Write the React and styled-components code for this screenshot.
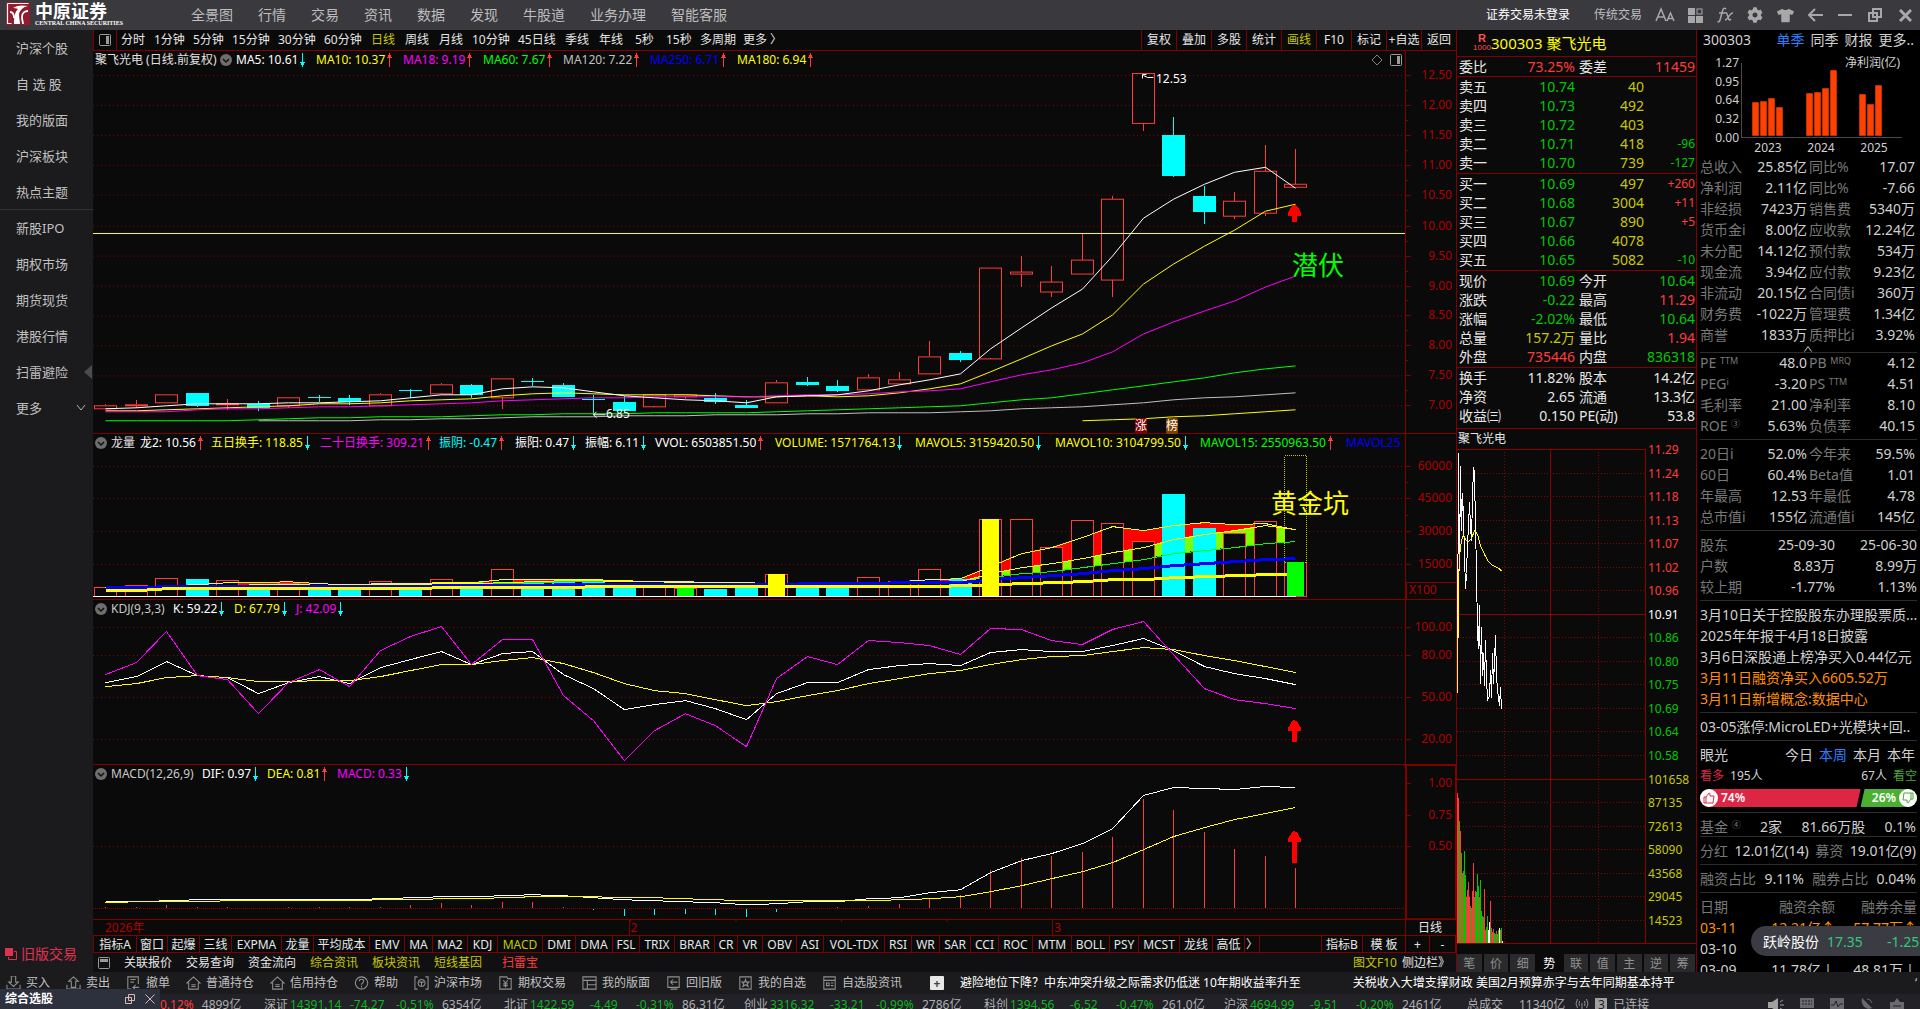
import React from 'react';
import styled, { createGlobalStyle } from 'styled-components';
import { FaCog, FaTshirt } from 'react-icons/fa';

const RED = '#ff3c3c';
const LINE = '#800000';
const AXIS = '#b00000';
const CYAN = '#00ffff';
const YELLOW = '#ffff00';
const OLIVE = '#c8c800';
const GREEN = '#00ff00';
const DOWN = '#00c800';
const MAGENTA = '#ff00ff';
const ORANGE = '#ff9000';

const MENU = ['全景图', '行情', '交易', '资讯', '数据', '发现', '牛股道', '业务办理', '智能客服'];

const SIDEBAR = ['沪深个股', '自 选 股', '我的版面', '沪深板块', '热点主题', '新股IPO', '期权市场', '期货现货', '港股行情', '扫雷避险', '更多'];

const PERIODS = [
    ['分时', 33], ['1分钟', 39], ['5分钟', 39], ['15分钟', 46], ['30分钟', 46], ['60分钟', 47], ['日线', 34],
    ['周线', 34], ['月线', 33], ['10分钟', 46], ['45日线', 47], ['季线', 34], ['年线', 36], ['5秒', 31],
    ['15秒', 34], ['多周期', 43], ['更多 〉', 48]
];

const TOOLS = ['复权', '叠加', '多股', '统计', '画线', 'F10', '标记', '+自选', '返回'];

const INDICATORS = [
    ['指标A', 43], ['窗口', 31], ['起爆', 32], ['三线', 32], ['EXPMA', 50], ['龙量', 32], ['平均成本', 56],
    ['EMV', 35], ['MA', 28], ['MA2', 35], ['KDJ', 30], ['MACD', 45], ['DMI', 33], ['DMA', 37], ['FSL', 27],
    ['TRIX', 35], ['BRAR', 40], ['CR', 23], ['VR', 25], ['OBV', 34], ['ASI', 27], ['VOL-TDX', 61], ['RSI', 27],
    ['WR', 28], ['SAR', 31], ['CCI', 28], ['ROC', 34], ['MTM', 39], ['BOLL', 38], ['PSY', 29], ['MCST', 41],
    ['龙线', 33], ['高低', 32], ['〉', 15]
];

// [kind, high, top, bottom, low]
const CANDLES = [
    ['r', 405, 406, 409, 409], ['r', 401, 405, 406, 409], ['r', 395, 395, 403, 403], ['c', 394, 394, 407, 408],
    ['r', 400, 404, 405, 411], ['c', 402, 405, 409, 412], ['r', 398, 398, 406, 409], ['c', 396, 398, 399, 403],
    ['c', 396, 399, 403, 406], ['r', 394, 395, 406, 406], ['c', 390, 391, 392, 399], ['r', 384, 385, 394, 395],
    ['c', 385, 386, 396, 399], ['r', 379, 379, 398, 410], ['c', 379, 382, 383, 387], ['c', 384, 386, 398, 398],
    ['c', 396, 400, 401, 415], ['c', 397, 403, 412, 412], ['r', 395, 395, 407, 408], ['r', 395, 395, 397, 400],
    ['c', 394, 399, 403, 405], ['c', 401, 406, 409, 409], ['r', 381, 383, 403, 403], ['c', 378, 383, 386, 387],
    ['c', 381, 387, 392, 393], ['r', 375, 378, 390, 391], ['r', 373, 380, 384, 384], ['r', 342, 357, 374, 374],
    ['c', 352, 354, 361, 363], ['r', 268, 268, 359, 360], ['r', 256, 272, 274, 287], ['r', 266, 282, 292, 297],
    ['r', 234, 260, 274, 274], ['r', 196, 199, 280, 297], ['r', 73, 73, 123, 131], ['c', 117, 135, 176, 177],
    ['c', 186, 196, 212, 224], ['r', 192, 201, 216, 219], ['r', 145, 171, 213, 216], ['r', 149, 184, 187, 187]
];

const MA5 = [409, 408, 406, 404, 404, 404, 403, 403, 402, 401, 398, 395, 395, 389, 387, 388, 392, 396, 398, 400, 401, 403, 397, 396, 395, 391, 385, 380, 374, 349, 328, 308, 289, 256, 218, 199, 184, 172, 167, 188];
const MA10 = [411, 411, 410, 409, 408, 407, 406, 404, 404, 403, 401, 400, 399, 396, 394, 393, 394, 395, 395, 395, 396, 397, 397, 396, 397, 396, 393, 389, 384, 372, 359, 346, 334, 315, 284, 264, 246, 230, 211, 204];
const MA18 = [412, 412, 412, 410, 409, 409, 408, 407, 407, 406, 405, 404, 403, 401, 400, 399, 398, 398, 397, 397, 397, 397, 396, 395, 395, 394, 392, 391, 389, 382, 375, 370, 363, 352, 334, 322, 311, 301, 287, 276];
const MA60 = [421, 421, 421, 421, 421, 420, 419, 418, 418, 417, 417, 417, 416, 415, 415, 414, 414, 414, 413, 413, 413, 413, 412, 411, 410, 409, 408, 407, 406, 403, 400, 398, 394, 390, 386, 382, 378, 373, 369, 366];
const MA120 = [421, 421, 421, 421, 420, 420, 419, 419, 418, 417, 417, 417, 416, 416, 416, 415, 415, 415, 414, 414, 413, 413, 413, 412, 411, 409, 408, 407, 405, 403, 400, 398, 397, 395, 393];
const MA180 = [421, 420, 419, 417, 416, 414, 412, 410];

// [kind, top]; y = yellow filled, g = green filled
const VOLUMES = [
    ['r', 588], ['r', 586], ['r', 579], ['c', 580], ['r', 581], ['c', 588], ['r', 584], ['c', 588], ['c', 588],
    ['r', 582], ['c', 586], ['r', 580], ['c', 583], ['r', 570], ['c', 584], ['c', 583], ['c', 583], ['c', 587],
    ['r', 588], ['g', 589], ['c', 590], ['c', 588], ['y', 575], ['c', 588], ['c', 588], ['r', 578], ['r', 582],
    ['r', 570], ['c', 580], ['y', 520], ['r', 520], ['r', 548], ['r', 521], ['r', 524], ['r', 542], ['c', 495],
    ['c', 529], ['r', 534], ['r', 522], ['g', 563]
];

const VOL5 = [588, 587, 586, 585, 583, 583, 582, 584, 585, 584, 584, 583, 583, 580, 580, 580, 580, 581, 582, 582, 583, 583, 584, 585, 585, 583, 582, 580, 579, 567, 554, 548, 538, 527, 531, 526, 523, 525, 524, 530];
const VOL10 = [588, 588, 587, 587, 586, 585, 585, 584, 585, 585, 585, 584, 584, 583, 582, 581, 581, 582, 582, 583, 583, 584, 584, 584, 584, 584, 583, 583, 582, 574, 568, 564, 559, 553, 548, 540, 535, 531, 526, 530];
const VOL15 = [588, 588, 588, 587, 587, 586, 586, 586, 586, 585, 585, 584, 584, 584, 583, 582, 582, 582, 582, 583, 584, 584, 584, 584, 584, 584, 584, 584, 583, 578, 574, 572, 568, 564, 560, 554, 551, 548, 544, 542];
const VOL25 = [588, 588, 587, 587, 587, 587, 587, 587, 587, 587, 587, 586, 586, 586, 586, 585, 585, 585, 585, 585, 585, 585, 585, 584, 584, 584, 583, 583, 583, 580, 578, 576, 574, 571, 569, 566, 564, 562, 560, 559];
const VOL60 = [591, 591, 589, 589, 589, 589, 589, 589, 589, 589, 589, 588, 588, 588, 588, 588, 587, 587, 587, 587, 587, 587, 587, 587, 587, 587, 587, 587, 586, 585, 584, 583, 582, 580, 580, 578, 577, 576, 575, 575];

const K = [683, 677, 662, 676, 678, 694, 683, 677, 684, 668, 660, 652, 665, 654, 652, 675, 689, 710, 705, 701, 709, 720, 694, 683, 683, 670, 666, 664, 666, 653, 650, 652, 652, 646, 639, 651, 667, 674, 679, 685];
const D = [687, 684, 678, 676, 678, 682, 682, 681, 681, 677, 671, 665, 665, 661, 658, 664, 673, 684, 691, 694, 700, 706, 702, 696, 691, 684, 679, 674, 671, 665, 660, 657, 656, 652, 648, 650, 656, 661, 667, 673];
const J = [675, 663, 632, 676, 680, 714, 683, 670, 687, 651, 637, 627, 665, 640, 640, 696, 721, 761, 731, 714, 726, 747, 679, 657, 665, 641, 643, 646, 655, 629, 630, 641, 645, 630, 622, 655, 689, 700, 704, 709];

const DIF = [901, 901, 900, 899, 899, 899, 899, 899, 899, 898, 897, 896, 896, 895, 894, 895, 897, 899, 900, 901, 902, 904, 903, 901, 901, 898, 897, 892, 889, 872, 860, 853, 843, 828, 795, 787, 788, 789, 786, 787];
const DEA = [902, 901, 901, 901, 900, 900, 900, 900, 900, 899, 899, 898, 898, 897, 896, 896, 896, 897, 897, 898, 899, 900, 900, 900, 900, 900, 899, 898, 896, 891, 885, 878, 871, 862, 849, 836, 827, 819, 813, 807];
const MACD = [907, 907, 905, 907, 907, 908, 907, 907, 907, 907, 905, 903, 905, 902, 902, 907, 909, 915, 914, 913, 914, 916, 911, 908, 907, 906, 904, 898, 895, 870, 858, 856, 852, 837, 799, 810, 832, 849, 856, 868];

const PRICE = [
    [52, 690], [55, 70], [58, 420], [61, 108], [64, 300], [67, 188], [70, 260], [73, 375], [76, 475], [79, 430], [82, 340],
    [85, 290], [88, 215], [91, 290], [94, 330], [97, 200], [100, 110], [103, 125], [106, 290], [109, 420], [112, 610],
    [115, 655], [118, 525], [121, 760], [124, 590], [127, 735], [130, 670], [133, 765], [136, 630], [139, 740],
    [142, 810], [148, 795], [151, 720], [154, 800], [155, 668], [158, 760], [163, 690], [166, 615], [169, 735],
    [172, 780], [177, 825], [181, 770], [184, 838]
];
const AVERAGE = [[52, 788], [55, 460], [58, 375], [64, 330], [70, 313], [76, 328], [85, 332], [94, 325], [103, 300], [112, 312], [121, 345], [133, 372], [145, 392], [157, 404], [170, 410], [185, 422]];
const TICKS = [
    ['r', 160], ['r', 174], ['g', 243], ['r', 273], ['g', 340], ['r', 400], ['g', 393], ['g', 333], ['g', 405], ['r', 472],
    ['r', 450], ['r', 427], ['r', 470], ['g', 497], ['r', 505], ['r', 452], ['r', 370], ['g', 470], ['r', 452], ['g', 455],
    ['g', 402], ['g', 437], ['r', 470], ['g', 420], ['g', 513], ['g', 527], ['r', 530], ['r', 447], ['r', 570], ['g', 562],
    ['g', 527], ['w', 570], ['w', 545], ['r', 483], ['g', 565], ['r', 575], ['r', 567], ['g', 578], ['g', 582], ['r', 572],
    ['g', 583], ['g', 570], ['w', 565], ['r', 570], ['g', 563], ['w', 603]
];
const TICK_COLORS = { r: RED, g: DOWN, w: '#ffffff' };

const ASKS = [['卖五', '10.74', 40], ['卖四', '10.73', 492], ['卖三', '10.72', 403], ['卖二', '10.71', 418, '-96'], ['卖一', '10.70', 739, '-127']];
const BIDS = [['买一', '10.69', 497, '+260'], ['买二', '10.68', 3004, '+11'], ['买三', '10.67', 890, '+5'], ['买四', '10.66', 4078], ['买五', '10.65', 5082, '-10']];

const SUMMARY = [
    ['现价', '10.69', DOWN, '今开', '10.64', DOWN],
    ['涨跌', '-0.22', DOWN, '最高', '11.29', RED],
    ['涨幅', '-2.02%', DOWN, '最低', '10.64', DOWN],
    ['总量', '157.2万', OLIVE, '量比', '1.94', RED],
    ['外盘', '735446', RED, '内盘', '836318', DOWN]
];
const CAPITAL = [
    ['换手', '11.82%', '#e6e6e6', '股本', '14.2亿', '#e6e6e6'],
    ['净资', '2.65', '#e6e6e6', '流通', '13.3亿', '#e6e6e6'],
    ['收益㈢', '0.150', '#e6e6e6', 'PE(动)', '53.8', '#e6e6e6']
];

const FINANCE = [
    ['总收入', '25.85亿', '同比%', '17.07'], ['净利润', '2.11亿', '同比%', '-7.66'], ['非经损', '7423万', '销售费', '5340万'],
    ['货币金i', '8.00亿', '应收款', '12.24亿'], ['未分配', '14.12亿', '预付款', '534万'], ['现金流', '3.94亿', '应付款', '9.23亿'],
    ['非流动', '20.15亿', '合同债i', '360万'], ['财务费', '-1022万', '管理费', '1.34亿'], ['商誉', '1833万', '质押比i', '3.92%']
];
const RATIOS = [
    [<>PE <sup>TTM</sup></>, '48.0', <>PB <sup>MRQ</sup></>, '4.12'],
    [<>PEG<sup>i</sup></>, '-3.20', <>PS <sup>TTM</sup></>, '4.51'],
    ['毛利率', '21.00', '净利率', '8.10'],
    [<>ROE <sup>③</sup></>, '5.63%', '负债率', '40.15']
];
const RETURNS = [
    ['20日i', '52.0%', '今年来', '59.5%'], ['60日', '60.4%', 'Beta值', '1.01'],
    ['年最高', '12.53', '年最低', '4.78'], ['总市值i', '155亿', '流通值i', '145亿']
];

const PRICE_LABELS = [
    ['11.29', 449], ['11.24', 473], ['11.18', 496], ['11.13', 520], ['11.07', 543], ['11.02', 567], ['10.96', 590], ['10.91', 614],
    ['10.86', 637], ['10.80', 661], ['10.75', 684], ['10.69', 708], ['10.64', 731], ['10.58', 755],
    ['101658', 779], ['87135', 802], ['72613', 826], ['58090', 849], ['43568', 873], ['29045', 896], ['14523', 920]
];

const INDEXES = [
    ['深证', '14391.14', '-74.27', '-0.51%', '6354亿'], ['北证', '1422.59', '-4.49', '-0.31%', '86.31亿'],
    ['创业', '3316.32', '-33.21', '-0.99%', '2786亿'], ['科创', '1394.56', '-6.52', '-0.47%', '261.0亿'],
    ['沪深', '4694.99', '-9.51', '-0.20%', '2461亿']
];

const cx = i => Math.round(105 + i * 30.52);
const points = (values, start = 0) => values.map((y, i) => `${cx(i + start)},${y}`).join(' ');
const band = (upper, lower, start) =>
    `${points(upper.slice(start), start)} ${points(lower.slice(start), start).split(' ').reverse().join(' ')}`;

const Arrow = ({ up }) => (
    <svg width="5" height="14" viewBox="0 0 5 14" shapeRendering="crispEdges">
        <path d={up ? 'M2 0h1v14h-1zM1 2h3v3h-3zM0 4h5v1h-5z' : 'M2 0h1v14h-1zM1 9h3v3h-3zM0 9h5v1h-5z'} fill={up ? RED : CYAN} />
    </svg>
);

const Collapse = () => (
    <RoundButton aria-label="展开指标菜单">
        <svg width="12" height="12" viewBox="0 0 12 12">
            <circle cx="6" cy="6" r="6" fill="#6e6e6e" />
            <path d="M3 5l3 3 3-3" fill="none" stroke="#101010" strokeWidth="1.5" />
        </svg>
    </RoundButton>
);

const SplitIcon = () => (
    <svg width="12" height="12" viewBox="0 0 12 12">
        <rect x="0.5" y="0.5" width="11" height="11" rx="1" fill="none" stroke="#9a9a9a" />
        <rect x="7" y="2" width="3" height="8" fill="#9a9a9a" />
    </svg>
);

const Field = ({ w, color, label, up }) => (
    <FieldBox $w={w} $color={color}>
        {label}
        {up !== undefined && <Arrow up={up} />}
    </FieldBox>
);

const Grid = ({ rows }) => rows.map(y => (
    <line key={y} x1="93" x2="1404" y1={y + 0.5} y2={y + 0.5} stroke="#8c0000" strokeDasharray="1 3" />
));

const Line = ({ data, start, color, width = 1 }) => (
    <polyline points={points(data, start)} transform="translate(0.5 0.5)" fill="none" stroke={color} strokeWidth={width} />
);

const BigArrow = ({ top, bottom }) => (
    <path d={`M1294 ${top}l3 1 4 7v3h-4V${bottom}h-5V${top + 11}h-4v-3l4-7z`} fill="#ff0000" />
);

const Plot = ({ top, height, children }) => (
    <PlotSvg viewBox={`93 ${top} 1312 ${height}`} preserveAspectRatio="none" shapeRendering="crispEdges">{children}</PlotSvg>
);

const Axis = ({ top, height, labels, minor = [], children }) => {
    const pct = y => `${(y - top) / height * 100}%`;
    return (
        <AxisSvg>
            {labels.map(([text, y]) => (
                <React.Fragment key={text}>
                    <line x1="0" x2="5" y1={pct(y + 0.5)} y2={pct(y + 0.5)} stroke={LINE} shapeRendering="crispEdges" />
                    <text x="46" y={pct(y + 4)} textAnchor="end" fill={AXIS}>{text}</text>
                </React.Fragment>
            ))}
            {minor.map(y => <line key={y} x1="0" x2="2" y1={pct(y + 0.5)} y2={pct(y + 0.5)} stroke={LINE} shapeRendering="crispEdges" />)}
            {children}
        </AxisSvg>
    );
};

const Note = ({ x, y, top, height, children, ...rest }) => (
    <NoteBox {...rest} style={{ left: `${(x - 93) / 13.12}%`, top: `${(y - top) / height * 100}%` }}>{children}</NoteBox>
);

const Candle = ({ i, kind, high, top, bottom, low }) => {
    const x = cx(i);
    const color = kind === 'r' ? RED : CYAN;
    return (
        <g>
            {high < top && <rect x={x} y={high} width="1" height={top - high} fill={color} />}
            {low > bottom && <rect x={x} y={bottom} width="1" height={low - bottom} fill={color} />}
            {kind === 'r'
                ? <rect x={x - 10.5} y={top + 0.5} width="22" height={bottom - top} fill="none" stroke={color} />
                : <rect x={x - 11} y={top} width="23" height={bottom - top} fill={color} />}
        </g>
    );
};

const VolumeBar = ({ i, kind, top }) => {
    const x = cx(i);
    if (kind === 'c') return <rect x={x - 11} y={top} width="23" height={597 - top} fill={CYAN} />;
    return <rect x={x - 10.5} y={top + 0.5} width="22" height={597 - top} fill="#0a0a0a" stroke={RED} />;
};

const TopBar = () => (
    <Header>
        <Logo>
            <svg width="24" height="23" viewBox="0 0 24 23">
                <rect width="24" height="23" fill="#8f1d2e" />
                <path d="M1.500 1.500h21M1.500 1.500v20h4" fill="none" stroke="#fff" strokeWidth="1.2" />
                <path d="M7 6c4-3 10-3 15-2-5 1-8 4-9 8 0 4 1 7 1 10H8c0-8 1-12 4-15-2-1-4-1-5-1z" fill="#fff" />
                <path d="M4 10c3 0 4 2 4 6M22 9c-3 0-6 2-6 6 0 3 1 5 1 7" fill="none" stroke="#fff" strokeWidth="1.8" />
            </svg>
            <LogoText>
                <strong>中原证券</strong>
                <small>CENTRAL CHINA SECURITIES</small>
            </LogoText>
        </Logo>
        <Menu>{MENU.map(m => <MenuLink key={m} href="#">{m}</MenuLink>)}</Menu>
        <Account>证券交易未登录</Account>
        <Trade>传统交易</Trade>
        <WindowButton aria-label="字号">
            <svg width="20" height="16" viewBox="0 0 20 16" fill="none" stroke="currentColor" strokeWidth="1.5">
                <path d="M1 14L6 2l5 12M3 10h6M12 14l3.500-8 3.500 8M13 11.500h5" />
            </svg>
        </WindowButton>
        <WindowButton aria-label="布局">
            <svg width="15" height="15" viewBox="0 0 15 15">
                <path d="M0 0h7v7H0zM0 8h7v7H0zM8 8h7v7H8z" fill="currentColor" />
                <rect x="9" y="1" width="5" height="5" fill="none" stroke="currentColor" />
            </svg>
        </WindowButton>
        <WindowButton aria-label="公式">
            <svg width="17" height="16" viewBox="0 0 17 16" fill="none" stroke="currentColor" strokeWidth="1.5">
                <path d="M9 2C7 0 6 2 5.500 4L3 13c-.5 2-1.500 2-2.500 1.500M2 6h6M8 6c2-1 2 1 3 4s1 4 3 2M16 6c-3-1-5 7-8 7" />
            </svg>
        </WindowButton>
        <WindowButton aria-label="设置"><FaCog size={16} /></WindowButton>
        <WindowButton aria-label="皮肤"><FaTshirt size={17} /></WindowButton>
        <WindowButton aria-label="返回">
            <svg width="15" height="14" viewBox="0 0 15 14" fill="none" stroke="currentColor" strokeWidth="2"><path d="M7 1L1 7l6 6M1 7h14" /></svg>
        </WindowButton>
        <WindowButton aria-label="最小化">
            <svg width="14" height="14" viewBox="0 0 14 14" stroke="currentColor" strokeWidth="2"><path d="M0 7h14" /></svg>
        </WindowButton>
        <WindowButton aria-label="还原">
            <svg width="14" height="14" viewBox="0 0 14 14" fill="none" stroke="currentColor" strokeWidth="2"><path d="M5 1h8v8H5zM9 5H1v8h8z" /></svg>
        </WindowButton>
        <WindowButton aria-label="关闭">
            <svg width="13" height="13" viewBox="0 0 13 13" stroke="currentColor" strokeWidth="3"><path d="M1 1l11 11M12 1L1 12" /></svg>
        </WindowButton>
    </Header>
);

const Sidebar = () => (
    <Side>
        {SIDEBAR.map((s, i) => (
            <SideLink key={s} href="#" $divider={i === 4}>
                {s}
                {s === '扫雷避险' && <svg width="8" height="14" viewBox="0 0 8 14"><path d="M8 0v14L0 7z" fill="#4a4a50" /></svg>}
                {s === '更多' && (
                    <SideChevron width="10" height="8" viewBox="0 0 10 8"><path d="M1 1l4 5 4-5" fill="none" stroke="#b0b0b0" /></SideChevron>
                )}
            </SideLink>
        ))}
        <OldTrade>
            <svg width="12" height="12" viewBox="0 0 12 12"><path d="M0 0h8v8H0z" fill="#e0314f" /><path d="M9 3.500h2.500v8h-8V9" fill="none" stroke="#e0314f" /></svg>
            旧版交易
        </OldTrade>
    </Side>
);

const PricePane = () => {
    const box = { top: 69, height: 365 };
    const labels = Array.from({ length: 12 }, (_, i) => [(12.5 - i * 0.5).toFixed(2), Math.round(75 + i * 30.1)]);
    return (
        <Pane $grow={384}>
            <PaneMain>
                <PaneHead>
                    <Field w={125} color="#e0e0e0" label="聚飞光电 (日线.前复权)" />
                    <Collapse />
                    <Field w={80} color="#ffffff" label="MA5: 10.61" up={false} />
                    <Field w={87} color={YELLOW} label="MA10: 10.37" up />
                    <Field w={80} color={MAGENTA} label="MA18: 9.19" up />
                    <Field w={80} color={GREEN} label="MA60: 7.67" up />
                    <Field w={87} color="#c0c0c0" label="MA120: 7.22" up />
                    <Field w={87} color="#0000ff" label="MA250: 6.71" up />
                    <Field w={90} color={YELLOW} label="MA180: 6.94" up />
                    <PaneIcons>
                        <svg width="12" height="12" viewBox="0 0 12 12"><path d="M6 1l5 5-5 5-5-5z" fill="none" stroke="#808080" /></svg>
                        <SplitIcon />
                    </PaneIcons>
                </PaneHead>
                <PlotBox>
                    <Plot {...box}>
                        <Grid rows={labels.map(l => l[1])} />
                        {CANDLES.map(([kind, high, top, bottom, low], i) => <Candle key={i} {...{ i, kind, high, top, bottom, low }} />)}
                        <rect x="93" y="233" width="1312" height="1" fill={YELLOW} />
                        <Line data={MA120} start={5} color="#c0c0c0" />
                        <Line data={MA60} color={GREEN} />
                        <Line data={MA180} start={32} color={YELLOW} />
                        <Line data={MA10} color={YELLOW} />
                        <Line data={MA18} color={MAGENTA} />
                        <Line data={MA5} color="#ffffff" />
                        <BigArrow top={205} bottom={222} />
                        <path d="M1142 74h4M1142 74v4M1143 75l4 2h6M593 415h12M593 415l3-3M593 415l3 3" transform="translate(0.5 0.5)" fill="none" stroke="#fff" />
                    </Plot>
                    <Note {...box} x={1156} y={71}>12.53</Note>
                    <Note {...box} x={606} y={407}>6.85</Note>
                    <Note {...box} x={1135} y={419} $bg="#800000">涨</Note>
                    <Note {...box} x={1166} y={419} $bg="#804000">榜</Note>
                    <Note {...box} x={1292} y={249} $size={26} $color={GREEN}>潜伏</Note>
                </PlotBox>
            </PaneMain>
            <Axis top={51} height={383} labels={labels} minor={labels.slice(0, -1).map(l => l[1] + 15)} />
        </Pane>
    );
};

const VolumePane = () => {
    const box = { top: 453, height: 147 };
    return (
        <Pane $grow={166}>
            <PaneMain>
                <PaneHead>
                    <Collapse />
                    <Field w={29} color="#e0e0e0" label="龙量" />
                    <Field w={71} color="#ffffff" label="龙2: 10.56" up />
                    <Field w={109} color={YELLOW} label="五日换手: 118.85" up={false} />
                    <Field w={119} color={MAGENTA} label="二十日换手: 309.21" up />
                    <Field w={76} color={CYAN} label="振阴: -0.47" up />
                    <Field w={70} color="#ffffff" label="振阳: 0.47" up={false} />
                    <Field w={70} color="#ffffff" label="振幅: 6.11" up={false} />
                    <Field w={120} color="#ffffff" label="VVOL: 6503851.50" up />
                    <Field w={140} color={YELLOW} label="VOLUME: 1571764.13" up={false} />
                    <Field w={140} color={YELLOW} label="MAVOL5: 3159420.50" up={false} />
                    <Field w={145} color={YELLOW} label="MAVOL10: 3104799.50" up={false} />
                    <Field w={146} color={GREEN} label="MAVOL15: 2550963.50" up />
                    <Field w={58} color="#0000ff" label="MAVOL25" />
                </PaneHead>
                <PlotBox>
                    <Plot {...box}>
                        <Grid rows={[467, 499, 532, 565]} />
                        <polygon points={band(VOL5, VOL10, 4)} fill="#ff0000" />
                        <polygon points={band(VOL10, VOL15, 28)} fill="#80ff00" />
                        {VOLUMES.map(([kind, top], i) => <VolumeBar key={i} {...{ i, kind, top }} />)}
                        <rect x="1284.5" y="456.5" width="22" height="107" fill="#0a0a0a" stroke={OLIVE} strokeDasharray="1 1" />
                        <Line data={VOL15} color={GREEN} />
                        <Line data={VOL10} color={YELLOW} />
                        <Line data={VOL5} color={YELLOW} />
                        <Line data={VOL25} color="#0000ff" width={3} />
                        <Line data={VOL60} color={YELLOW} width={3} />
                        {VOLUMES.map(([kind, top], i) => (kind === 'y' || kind === 'g') && (
                            <rect key={i} x={cx(i) - 8} y={top} width="17" height={597 - top} fill={kind === 'y' ? YELLOW : GREEN} />
                        ))}
                        <rect x="93" y="597" width="1203" height="1" fill="#ffffff" />
                    </Plot>
                    <Note {...box} x={1271} y={488} $size={26} $color={YELLOW}>黄金坑</Note>
                </PlotBox>
            </PaneMain>
            <Axis top={435} height={165} labels={[['60000', 467], ['45000', 499], ['30000', 532], ['15000', 565]]} minor={[483, 516, 549]}>
                <rect x="0" y="89.700%" width="50" height="17" fill="none" stroke={LINE} shapeRendering="crispEdges" />
                <text x="3" y="97%" fill={AXIS}>X100</text>
            </Axis>
        </Pane>
    );
};

const KdjPane = () => (
    <Pane $grow={164}>
        <PaneMain>
            <PaneHead>
                <Collapse />
                <Field w={62} color="#c8c8c8" label="KDJ(9,3,3)" />
                <Field w={61} color="#ffffff" label="K: 59.22" up={false} />
                <Field w={62} color={YELLOW} label="D: 67.79" up={false} />
                <Field w={60} color={MAGENTA} label="J: 42.09" up={false} />
            </PaneHead>
            <PlotBox>
                <Plot top={619} height={145}>
                    <Grid rows={[628, 656, 698, 740]} />
                    <Line data={K} color="#ffffff" />
                    <Line data={D} color={YELLOW} />
                    <Line data={J} color={MAGENTA} />
                    <BigArrow top={721} bottom={743} />
                </Plot>
            </PlotBox>
        </PaneMain>
        <Axis top={601} height={163} labels={[['100.00', 628], ['80.00', 656], ['50.00', 698], ['20.00', 740]]} />
    </Pane>
);

const MacdPane = () => (
    <Pane $grow={155}>
        <PaneMain>
            <PaneHead>
                <Collapse />
                <Field w={91} color="#c8c8c8" label="MACD(12,26,9)" />
                <Field w={65} color="#ffffff" label="DIF: 0.97" up={false} />
                <Field w={70} color={YELLOW} label="DEA: 0.81" up />
                <Field w={80} color={MAGENTA} label="MACD: 0.33" up={false} />
            </PaneHead>
            <PlotBox>
                <Plot top={783} height={136}>
                    <Grid rows={[846]} />
                    <line x1="93" x2="1404" y1="908.5" y2="908.5" stroke="#8c0000" strokeDasharray="1 1" />
                    {MACD.map((y, i) => (
                        <rect key={i} x={cx(i)} y={Math.min(y, 909)} width="1" height={Math.abs(908 - y)} fill={y > 908 ? CYAN : RED} />
                    ))}
                    <Line data={DIF} color="#ffffff" />
                    <Line data={DEA} color={YELLOW} />
                    <BigArrow top={831} bottom={863} />
                </Plot>
            </PlotBox>
        </PaneMain>
        <Axis top={765} height={154} labels={[['1.00', 783], ['0.75', 815], ['0.50', 846]]}>
            <rect x="0" y="0" width="50" height="100%" fill="none" stroke={LINE} strokeWidth="2" />
        </Axis>
    </Pane>
);

const ChartColumn = () => (
    <Charts>
        <PeriodBar>
            <PanelToggle aria-label="侧栏"><SplitIcon /></PanelToggle>
            {PERIODS.map(([p, w]) => <Period key={p} $w={w} $active={p === '日线'}>{p}</Period>)}
            <Tools>{TOOLS.map(t => <Tool key={t} $active={t === '画线'}>{t}</Tool>)}</Tools>
        </PeriodBar>
        <PricePane />
        <VolumePane />
        <KdjPane />
        <MacdPane />
        <DateRow>
            <Month $grow={530} $pad={12}>2026年</Month>
            <Month $grow={427} $mark $weeks>2</Month>
            <Month $grow={355} $mark>3</Month>
            <Cycle>日线</Cycle>
        </DateRow>
        <TabRow>
            {INDICATORS.map(([t, w]) => <Tab key={t} $w={w} $active={t === 'MACD'}>{t}</Tab>)}
            <Spacer />
            <Tab $w={42} $first>指标B</Tab>
            <Tab $w={43}>模 板</Tab>
            <Tab $w={24}>+</Tab>
            <Tab $w={26}>-</Tab>
        </TabRow>
        <LinkRow>
            <svg width="12" height="12" viewBox="0 0 12 12">
                <rect x="0.5" y="0.5" width="11" height="11" rx="1" fill="none" stroke="#9a9a9a" />
                <rect x="2" y="2" width="8" height="3" fill="#9a9a9a" />
            </svg>
            {['关联报价', '交易查询', '资金流向'].map(t => <InfoLink key={t} href="#">{t}</InfoLink>)}
            {['综合资讯', '板块资讯', '短线基因'].map(t => <InfoLink key={t} href="#" $color={OLIVE}>{t}</InfoLink>)}
            <InfoLink href="#" $color={RED} $gap={6}>扫雷宝</InfoLink>
            <Spacer />
            <SideText $color={OLIVE}>图文F10</SideText>
            <SideText>侧边栏》</SideText>
        </LinkRow>
    </Charts>
);

const Book = ({ rows }) => (
    <BookTable>
        <tbody>
            {rows.map(([label, price, vol, change]) => (
                <tr key={label}>
                    <BookLabel>{label}</BookLabel>
                    <Num $w={70} $color={DOWN}>{price}</Num>
                    <Num $w={69} $color={OLIVE}>{vol}</Num>
                    <Num $small $color={change && change[0] === '+' ? RED : DOWN}>{change}</Num>
                </tr>
            ))}
        </tbody>
    </BookTable>
);

const Stats = ({ rows }) => (
    <BookTable>
        <tbody>
            {rows.map(([l1, v1, c1, l2, v2, c2]) => (
                <tr key={l1}>
                    <BookLabel>{l1}</BookLabel>
                    <Num $w={70} $color={c1}>{v1}</Num>
                    <BookLabel $pad>{l2}</BookLabel>
                    <Num $color={c2}>{v2}</Num>
                </tr>
            ))}
        </tbody>
    </BookTable>
);

const Intraday = () => {
    const pct = y => `${(y - 448) / 496 * 100}%`;
    const xy = list => list.map(([x, y]) => `${Math.round(1440 + x / 3)},${Math.round(430 + y / 3)}`).join(' ');
    return (
        <IntradayBox>
            <IntradayTitle>聚飞光电</IntradayTitle>
            <IntradayBody>
                <IntradayPlot viewBox="1457 448 189 496" preserveAspectRatio="none" shapeRendering="crispEdges">
                    {PRICE_LABELS.map(([, y]) => {
                        const solid = y === 449 || y === 614 || y === 779;
                        return <line key={y} x1="1457" x2="1645" y1={y + 0.5} y2={y + 0.5} stroke="#8c0000" strokeDasharray={solid ? 'none' : '1 2'} />;
                    })}
                    <path d="M1504.5 449v495M1598.5 449v495" stroke="#8c0000" strokeDasharray="1 2" />
                    <path d="M1550.5 449v495M1645.5 449v495M1457 943.5h189" stroke="#8c0000" />
                    {TICKS.map(([kind, y], i) => {
                        const top = Math.round(740 + y / 3);
                        return <rect key={i} x={1457 + i} y={top} width="1" height={943 - top} fill={TICK_COLORS[kind]} />;
                    })}
                    <polyline points={xy(PRICE)} fill="none" stroke="#ffffff" transform="translate(0.5 0.5)" />
                    <polyline points={xy(AVERAGE)} fill="none" stroke={YELLOW} transform="translate(0.5 0.5)" />
                </IntradayPlot>
                <IntradayAxis>
                    {PRICE_LABELS.map(([text, y]) => (
                        <text key={text} x="2" y={pct(y + 5)} fill={y > 770 ? OLIVE : y < 610 ? RED : y > 620 ? DOWN : '#ffffff'}>{text}</text>
                    ))}
                    <line x1="0" x2="50" y1={pct(943.5)} y2={pct(943.5)} stroke="#8c0000" shapeRendering="crispEdges" />
                </IntradayAxis>
            </IntradayBody>
            <ModeRow>
                {['笔', '价', '细', '势', '联', '值', '主', '逆', '筹'].map(m => <Mode key={m} $active={m === '势'}>{m}</Mode>)}
            </ModeRow>
        </IntradayBox>
    );
};

const QuoteColumn = () => (
    <Quote>
        <QuoteTitle>
            <Badge><b>R</b><span>1000</span></Badge>
            300303 聚飞光电
        </QuoteTitle>
        <Block $bottom={0}><Stats rows={[['委比', '73.25%', RED, '委差', '11459', RED]]} /></Block>
        <Block><Book rows={ASKS} /></Block>
        <Block><Book rows={BIDS} /></Block>
        <Block><Stats rows={SUMMARY} /></Block>
        <Block $bottom={3}><Stats rows={CAPITAL} /></Block>
        <Intraday />
    </Quote>
);

const ProfitChart = () => {
    const bars = [[1752, 102], [1760, 101], [1768, 98], [1776, 107], [1806, 93], [1814, 92], [1822, 88], [1830, 70], [1859, 94], [1867, 104], [1875, 85]];
    return (
        <ProfitSvg width="223" height="104" viewBox="1697 53 223 104">
            {['1.27', '0.95', '0.64', '0.32', '0.00'].map((t, i) => (
                <text key={t} x="1739" y={67 + Math.round(i * 18.7)} textAnchor="end">{t}</text>
            ))}
            <text x="1845" y="67">净利润(亿)</text>
            <path d="M1741.500 63v74.500H1902" fill="none" stroke="#4a4a4a" shapeRendering="crispEdges" />
            {bars.map(([x, y]) => <rect key={x} x={x} y={y} width="7" height={136 - y} fill="#ff4000" stroke="#000" strokeWidth="0.500" />)}
            {[['2023', 1768], ['2024', 1821], ['2025', 1874]].map(([t, x]) => <text key={t} x={x} y="152" textAnchor="middle">{t}</text>)}
        </ProfitSvg>
    );
};

const Pairs = ({ rows }) => (
    <PairTable>
        <tbody>
            {rows.map(([l1, v1, l2, v2], i) => (
                <tr key={i}><th>{l1}</th><td>{v1}</td><th>{l2}</th><td>{v2}</td></tr>
            ))}
        </tbody>
    </PairTable>
);

const FinanceColumn = () => (
    <Finance>
        <FinanceHead>
            <FinanceCode>300303</FinanceCode>
            <TextButton $active>单季</TextButton>
            <TextButton>同季</TextButton>
            <TextButton>财报</TextButton>
            <TextButton>更多..</TextButton>
        </FinanceHead>
        <ProfitChart />
        <Section $top={0} $bottom={0}>
            <Pairs rows={FINANCE} />
            <Fold aria-label="收起"><svg width="8" height="6" viewBox="0 0 8 6"><path d="M0.500 5.500L4 0.500l3.500 5" fill="none" stroke="#d0d0d0" /></svg></Fold>
        </Section>
        <Section $top={0}><Pairs rows={RATIOS} /></Section>
        <Section><Pairs rows={RETURNS} /></Section>
        <Section>
            <HolderTable>
                <tbody>
                    <tr><th>股东</th><td>25-09-30</td><td>25-06-30</td></tr>
                    <tr><th>户数</th><td>8.83万</td><td>8.99万</td></tr>
                    <tr><th>较上期</th><td>-1.77%</td><td>1.13%</td></tr>
                </tbody>
            </HolderTable>
        </Section>
        <Section>
            <News href="#">3月10日关于控股股东办理股票质...</News>
            <News href="#">2025年年报于4月18日披露</News>
            <News href="#">3月6日深股通上榜净买入0.44亿元</News>
            <News href="#" $hot>3月11日融资净买入6605.52万</News>
            <News href="#" $hot>3月11日新增概念:数据中心</News>
        </Section>
        <Section><News href="#">03-05涨停:MicroLED+光模块+回..</News></Section>
        <Section $bottom={5}>
            <VoteRow>
                <VoteTitle>眼光</VoteTitle>
                <TextButton>今日</TextButton>
                <TextButton $active>本周</TextButton>
                <TextButton>本月</TextButton>
                <TextButton>本年</TextButton>
            </VoteRow>
            <Votes>
                <Bulls>看多</Bulls> 195人 <Spacer /> 67人 <Bears>看空</Bears>
            </Votes>
            <VoteBar>
                <Bull>
                    <Thumb><svg width="12" height="12" viewBox="0 0 12 12" fill="none" stroke="#e0284a"><path d="M1 5h2v6H1zM3 5l3-4c1 0 1 1 1 3h4l-1 7H3" /></svg></Thumb>
                    74%
                </Bull>
                <Bear>
                    26%
                    <Thumb><svg width="12" height="12" viewBox="0 0 12 12" fill="none" stroke="#4ca832"><path d="M11 7H9V1h2zM9 7l-3 4c-1 0-1-1-1-3H1l1-7h7" /></svg></Thumb>
                </Bear>
            </VoteBar>
        </Section>
        <Section $bottom={0}><InfoRow $h={19}><i>基金 <sup>④</sup></i><span>2家</span><span>81.66万股</span><span>0.1%</span></InfoRow></Section>
        <Section><InfoRow><i>分红</i><span>12.01亿(14)</span><i>募资</i><span>19.01亿(9)</span></InfoRow></Section>
        <Section><InfoRow><i>融资占比</i><span>9.11%</span><i>融券占比</i><span>0.04%</span></InfoRow></Section>
        <Section>
            <HolderTable>
                <tbody>
                    <tr><th>日期</th><th>融资余额</th><th>融券余量</th></tr>
                    <HotRow><td>03-11</td><td>12.21亿↑</td><td>57.77万↑</td></HotRow>
                    <tr><td>03-10</td><td /><td /></tr>
                    <tr><td>03-09</td><td>11.78亿↓</td><td>48.81万↓</td></tr>
                </tbody>
            </HolderTable>
        </Section>
        <Pill><b>跃岭股份</b><span>17.35</span><span>-1.25</span></Pill>
    </Finance>
);

const ICONS = {
    buy: 'M6 0h5v7h3l-5.500 5L3 7h3zM1 10v5h15v-5',
    sell: 'M8.500 1L14 6h-3v7H6V6H3zM1 10v5h15v-5',
    cancel: 'M6 15H2V1h12v8M5 4h6M5 7h4M15 13H8l3-3M8 13l3 3',
    home: 'M1 8l7.500-7L16 8h-2v7H3V8zM6 10h5M6 12h5',
    help: 'M8.500 1a7 7 0 1 0 .1 0zM6 6c0-3 5-3 5 0 0 2-2.500 2-2.500 4M8.500 11v2',
    market: 'M4 1H1v14h3M13 1h3v14h-3M8.500 4a4 4 0 1 0 .1 0zM6 7h5M8.500 7v4',
    option: 'M2 1h8l1 2h4v12H2zM6 5l2.500 3L11 5M8.500 8v5M6 9h5M6 11h5',
    layout: 'M1 1h15v14H1zM1 5h15M6 5v10M6 10h10',
    back: 'M2 1h13v12H2zM5 7h8M5 7l3-3M5 7l3 3M5 15h8',
    star: 'M2 1h13v14H2zM8.500 4l1 3h3l-2 2 1 3-3-2-3 2 1-3-2-2h3z',
    news: 'M2 1h13v14H2zM2 5h13M5 8h3v3H5zM10 8h3M10 11h3'
};

const ACTIONS = [
    ['buy', '买入', 60], ['sell', '卖出', 60], ['cancel', '撤单', 60], ['home', '普通持仓', 84], ['home', '信用持仓', 84],
    ['help', '帮助', 60], ['market', '沪深市场', 84], ['option', '期权交易', 84], ['layout', '我的版面', 84],
    ['back', '回旧版', 72], ['star', '我的自选', 84], ['news', '自选股资讯', 108]
];

const Footer = () => (
    <>
        <ActionBar>
            {ACTIONS.map(([icon, label, w]) => (
                <Action key={label} $w={w}>
                    <svg width="15" height="14" viewBox="0 0 17 16" fill="none" stroke="#909090" strokeWidth="1.2"><path d={ICONS[icon]} /></svg>
                    {label}
                </Action>
            ))}
            <Plus aria-label="添加">+</Plus>
            <Ticker>
                <span>避险地位下降？中东冲突升级之际需求仍低迷 10年期收益率升至</span>
                <span>关税收入大增支撑财政 美国2月预算赤字与去年同期基本持平</span>
            </Ticker>
            ‘
        </ActionBar>
        <StatusBar>
            <FirstQuote><Pct $color={RED}>0.12%</Pct>4899亿</FirstQuote>
            {INDEXES.map(([name, price, change, pct, amount]) => (
                <IndexQuote key={name}>
                    <span>{name}</span><Pct>{price}</Pct><Pct>{change}</Pct><Pct>{pct}</Pct><span>{amount}</span>
                </IndexQuote>
            ))}
            <Total>总成交</Total>
            <span>11340亿</span>
            <Connection>
                <svg width="14" height="12" viewBox="0 0 14 12" fill="none" stroke="#909090"><path d="M2.500 1q-3 5 0 9M4.500 3q-1 3 0 5M9.500 3q1 3 0 5M11.500 1q3 5 0 9M7 5v7" /></svg>
                <em>3</em>已连接
            </Connection>
            <Spacer />
            <StatusIcons>
                <svg width="16" height="14" viewBox="0 0 16 14"><path d="M0 4h4l6-4v14l-6-4H0z" fill="#a0a0a0" /><path d="M12 4l3-2M12 7h4M12 10l3 2" stroke="#a0a0a0" /></svg>
                <svg width="14" height="12" viewBox="0 0 14 12"><path d="M0 0h14v10H0z" fill="#6a6a6e" /><path d="M2 3h10M2 6h10" stroke="#202025" strokeDasharray="2 1" /></svg>
                <svg width="14" height="12" viewBox="0 0 14 12"><path d="M0 0h14v12H0z" fill="#6a6a6e" /><path d="M1 7h3l2-4 2 6 2-3h3" fill="none" stroke="#202025" /></svg>
                <svg width="14" height="13" viewBox="0 0 14 13"><path d="M2 0l10 10c-5 3-12-3-10-10z" fill="#6a6a6e" /><path d="M7 1q4 0 5 4" stroke="#6a6a6e" fill="none" /></svg>
                <svg width="14" height="13" viewBox="0 0 14 13"><path d="M7 0l3 4h4v9H0V4h4z" fill="#6a6a6e" /><path d="M3 8h8" stroke="#202025" /></svg>
            </StatusIcons>
        </StatusBar>
        <Picker>
            <b>综合选股</b>
            <svg width="10" height="10" viewBox="0 0 10 10" fill="none" stroke="#d8b8b8"><path d="M3.500 0.500h6v6h-6zM6.500 3.500h-6v6h6z" /></svg>
            <svg width="10" height="10" viewBox="0 0 10 10" fill="none" stroke="#d8b8b8"><path d="M0.500 0.500l9 9M9.500 0.500l-9 9" /></svg>
        </Picker>
    </>
);

const App = () => (
    <Page>
        <GlobalStyle />
        <TopBar />
        <Main>
            <Sidebar />
            <ChartColumn />
            <QuoteColumn />
            <FinanceColumn />
        </Main>
        <Footer />
    </Page>
);

export default App;

const GlobalStyle = createGlobalStyle`
    * {
        box-sizing: border-box;
    }
    body {
        margin: 0;
        background: #0a0a0a;
        color: #e6e6e6;
        font: 12px/16px "Noto Sans", "Noto Sans CJK SC", sans-serif;
        overflow: hidden;
    }
    button {
        font: inherit;
        color: inherit;
        background: none;
        border: 0;
        padding: 0;
        cursor: pointer;
        white-space: nowrap;
    }
    a {
        color: inherit;
        text-decoration: none;
        white-space: nowrap;
    }
    svg {
        display: block;
        flex: none;
    }
    table {
        border-collapse: collapse;
        table-layout: fixed;
        width: 100%;
    }
    th {
        font-weight: normal;
    }
`;

const Page = styled.div`
    position: relative;
    display: flex;
    flex-direction: column;
    height: 100vh;
    overflow: hidden;
`;

const Spacer = styled.div`
    flex: 1;
`;

const Header = styled.header`
    display: flex;
    align-items: center;
    height: 30px;
    flex: none;
    background: #3a393e;
    font-size: 14px;
    color: #bebebe;
`;

const Logo = styled.div`
    display: flex;
    align-items: center;
    gap: 5px;
    width: 191px;
    padding: 0 0 3px 6px;
`;

const LogoText = styled.div`
    display: flex;
    flex-direction: column;
    color: #ffffff;
    strong {
        font: bold 18px/18px "Noto Sans CJK SC", sans-serif;
    }
    small {
        font: bold 6px/8px "Liberation Serif", serif;
    }
`;

const Menu = styled.nav`
    display: flex;
    gap: 25px;
    flex: 1;
`;

const MenuLink = styled.a`
    line-height: 20px;
`;

const Account = styled.span`
    font-size: 12px;
    color: #ffffff;
    margin-right: 24px;
`;

const Trade = styled.span`
    font-size: 12px;
    margin-right: 8px;
`;

const WindowButton = styled.button`
    display: flex;
    justify-content: center;
    width: 30px;
    color: #a8a8a8;
`;

const Main = styled.main`
    display: flex;
    flex: 1;
    min-height: 0;
`;

const Side = styled.nav`
    display: flex;
    flex-direction: column;
    width: 93px;
    flex: none;
    background: #1b1b1d;
    font-size: 13px;
    color: #c0c0c0;
`;

const SideLink = styled.a`
    display: flex;
    align-items: center;
    justify-content: space-between;
    height: 36px;
    padding: 0 1px 0 16px;
    border-bottom: 1px solid ${p => (p.$divider ? '#333336' : 'transparent')};
`;

const SideChevron = styled.svg`
    margin-right: 6px;
`;

const OldTrade = styled.button`
    display: flex;
    align-items: center;
    gap: 4px;
    margin: auto 0 8px 5px;
    font-size: 14px;
    line-height: 20px;
    color: #e0314f;
`;

const Charts = styled.section`
    display: flex;
    flex-direction: column;
    flex: 1;
    min-width: 0;
    overflow: hidden;
`;

const PeriodBar = styled.div`
    display: flex;
    height: 21px;
    flex: none;
    border-bottom: 1px solid ${LINE};
    overflow: hidden;
`;

const PanelToggle = styled.button`
    display: flex;
    align-items: center;
    justify-content: center;
    width: 24px;
    margin-right: 4px;
    border: 0 solid ${LINE};
    border-width: 0 1px;
`;

const Period = styled.button`
    width: ${p => p.$w}px;
    text-align: left;
    color: ${p => (p.$active ? OLIVE : 'inherit')};
`;

const Tools = styled.div`
    display: flex;
    margin-left: auto;
`;

const Tool = styled.button`
    width: 35px;
    border-left: 1px solid ${LINE};
    color: ${p => (p.$active ? OLIVE : 'inherit')};
`;

const Pane = styled.div`
    display: flex;
    flex: ${p => p.$grow} 1 0;
    min-height: 0;
    border-bottom: 1px solid ${LINE};
`;

const PaneMain = styled.div`
    display: flex;
    flex-direction: column;
    flex: 1;
    min-width: 0;
`;

const PaneHead = styled.div`
    display: flex;
    align-items: center;
    height: 18px;
    flex: none;
    padding-left: 2px;
    overflow: hidden;
`;

const PaneIcons = styled.div`
    display: flex;
    gap: 7px;
    margin: 0 3px 0 auto;
`;

const RoundButton = styled.button`
    margin: 0 4px 0 0;
`;

const FieldBox = styled.span`
    display: flex;
    align-items: center;
    gap: 2px;
    width: ${p => p.$w}px;
    flex: none;
    color: ${p => p.$color};
    white-space: pre;
`;

const PlotBox = styled.div`
    position: relative;
    flex: 1;
    min-height: 0;
`;

const PlotSvg = styled.svg`
    position: absolute;
    inset: 0;
    width: 100%;
    height: 100%;
    overflow: visible;
`;

const NoteBox = styled.span`
    position: absolute;
    font-size: ${p => p.$size || 12}px;
    line-height: ${p => (p.$size ? 32 : 16)}px;
    color: ${p => p.$color || '#ffffff'};
    background: ${p => p.$bg || 'none'};
    border-radius: 2px;
    white-space: nowrap;
`;

const AxisSvg = styled.svg`
    width: 51px;
    height: 100%;
    border-left: 1px solid ${LINE};
`;

const DateRow = styled.div`
    display: flex;
    height: 16px;
    flex: none;
    border-bottom: 1px solid ${LINE};
    line-height: 15px;
    color: ${AXIS};
`;

const Month = styled.div`
    flex: ${p => p.$grow} 1 0;
    padding-left: ${p => p.$pad || 1}px;
    border-left: ${p => (p.$mark ? 1 : 0)}px solid ${LINE};
    background: ${p => (p.$weeks ? `linear-gradient(90deg, ${LINE} 1px, transparent 1px) 0 0 / 25% 2px repeat-x` : 'none')};
`;

const Cycle = styled.button`
    width: 51px;
    padding-right: 2px;
    border-left: 1px solid ${LINE};
    color: #e6e6e6;
`;

const TabRow = styled.div`
    display: flex;
    height: 17px;
    flex: none;
    border: 0 solid ${LINE};
    border-width: 0 0 1px 1px;
    overflow: hidden;
`;

const Tab = styled.button`
    width: ${p => p.$w}px;
    flex: none;
    border: 0 solid ${LINE};
    border-width: 0 1px 0 ${p => (p.$first ? 1 : 0)}px;
    line-height: 15px;
    color: ${p => (p.$active ? OLIVE : 'inherit')};
`;

const LinkRow = styled.div`
    display: flex;
    align-items: center;
    gap: 14px;
    height: 19px;
    flex: none;
    padding: 0 6px 0 5px;
    background: #101012;
`;

const InfoLink = styled.a`
    margin-left: ${p => p.$gap || 0}px;
    color: ${p => p.$color || 'inherit'};
`;

const SideText = styled.button`
    margin-left: -9px;
    color: ${p => p.$color || 'inherit'};
`;

const Quote = styled.section`
    display: flex;
    flex-direction: column;
    width: 241px;
    flex: none;
    border: 0 solid ${LINE};
    border-width: 0 1px;
    font-size: 14px;
`;

const QuoteTitle = styled.h1`
    display: flex;
    align-items: center;
    height: 27px;
    margin: 0;
    padding-left: 16px;
    border-bottom: 1px solid ${LINE};
    font-size: 15px;
    font-weight: normal;
    line-height: 20px;
    color: ${YELLOW};
`;

const Badge = styled.span`
    display: flex;
    flex-direction: column;
    align-items: center;
    width: 18px;
    font: 8px/10px "Liberation Sans", sans-serif;
    color: #ff5050;
    b {
        font-size: 11px;
    }
`;

const Block = styled.div`
    padding-bottom: ${p => p.$bottom ?? 1}px;
    border-bottom: 1px solid ${LINE};
`;

const BookTable = styled.table`
    tr {
        height: 19px;
    }
    td, th {
        padding: 0;
        line-height: 19px;
        white-space: nowrap;
    }
`;

const BookLabel = styled.th`
    width: ${p => (p.$pad ? 50 : 48)}px;
    text-align: left;
    && {
        padding-left: ${p => (p.$pad ? 4 : 2)}px;
    }
`;

const Num = styled.td`
    width: ${p => (p.$w ? `${p.$w}px` : 'auto')};
    text-align: right;
    font-size: ${p => (p.$small ? 12 : 14)}px;
    color: ${p => p.$color};
    && {
        padding-right: ${p => (p.$w ? 0 : 1)}px;
    }
`;

const IntradayBox = styled.div`
    display: flex;
    flex-direction: column;
    flex: 1;
    min-height: 0;
`;

const IntradayTitle = styled.h2`
    margin: 0;
    padding-left: 1px;
    font-size: 12px;
    font-weight: normal;
    line-height: 19px;
`;

const IntradayBody = styled.div`
    display: flex;
    flex: 1;
    min-height: 0;
`;

const IntradayPlot = styled.svg`
    flex: 1;
    min-width: 0;
    height: 100%;
`;

const IntradayAxis = styled.svg`
    width: 50px;
    height: 100%;
    font-size: 12px;
    overflow: visible;
`;

const ModeRow = styled.div`
    display: flex;
    gap: 2px;
    margin-top: 10px;
    padding-right: 1px;
    height: 18px;
`;

const Mode = styled.button`
    flex: 1;
    font-size: 12px;
    line-height: 17px;
    color: ${p => (p.$active ? '#ffffff' : '#909090')};
    background: ${p => (p.$active ? 'none' : '#2a2a2c')};
`;

const Finance = styled.section`
    position: relative;
    width: 223px;
    flex: none;
    padding-left: 3px;
    background: #000000;
    font-size: 14px;
    line-height: 19px;
    color: #d0d0d0;
    overflow: hidden;
`;

const FinanceHead = styled.div`
    display: flex;
    align-items: flex-start;
    gap: 6px;
    height: 23px;
    padding: 0 6px 0 3px;
`;

const FinanceCode = styled.span`
    margin-right: auto;
`;

const TextButton = styled.button`
    color: ${p => (p.$active ? '#2a7fff' : 'inherit')};
`;

const ProfitSvg = styled.svg`
    margin-left: -3px;
    font-size: 12px;
    fill: #d0d0d0;
`;

const Section = styled.div`
    margin-right: 3px;
    padding: ${p => p.$top ?? 4}px 0 ${p => p.$bottom ?? 2}px;
    border-bottom: 1px solid #2c2c2c;
    sup {
        font-size: 9px;
        line-height: 9px;
        vertical-align: 4px;
    }
`;

const Fold = styled.button`
    display: block;
    height: 6px;
    margin-left: 104px;
`;

const PairTable = styled.table`
    tr {
        height: 21px;
        vertical-align: top;
    }
    th, td {
        padding: 0;
        white-space: nowrap;
    }
    th {
        width: 46px;
        text-align: left;
        color: #787878;
    }
    td {
        width: 61px;
        text-align: right;
    }
    td:last-child {
        width: auto;
        padding-right: 2px;
    }
    th:nth-child(3) {
        width: 48px;
        padding-left: 2px;
    }
`;

const HolderTable = styled.table`
    tr {
        height: 21px;
        vertical-align: top;
    }
    th, td {
        padding: 0;
        text-align: right;
        white-space: nowrap;
    }
    th {
        color: #787878;
    }
    th:first-child, td:first-child {
        width: 53px;
        text-align: left;
    }
`;

const HotRow = styled.tr`
    color: ${ORANGE};
`;

const News = styled.a`
    display: block;
    height: 21px;
    color: ${p => (p.$hot ? ORANGE : 'inherit')};
`;

const VoteRow = styled.div`
    display: flex;
    align-items: flex-start;
    gap: 6px;
    height: 21px;
    padding-right: 2px;
`;

const VoteTitle = styled.span`
    margin-right: auto;
`;

const Votes = styled.div`
    display: flex;
    gap: 6px;
    height: 21px;
    font-size: 12px;
`;

const Bulls = styled.span`
    color: #e0284a;
`;

const Bears = styled.span`
    color: #4ca832;
`;

const VoteBar = styled.div`
    display: flex;
    height: 18px;
    margin-top: 2px;
    font-size: 12px;
    font-weight: 600;
    line-height: 18px;
    color: #ffffff;
`;

const Bull = styled.div`
    display: flex;
    gap: 3px;
    flex: 74;
    background: #dc2644;
    border-radius: 9px 0 0 9px;
    clip-path: polygon(0 0, 100% 0, calc(100% - 4px) 100%, 0 100%);
`;

const Bear = styled.div`
    display: flex;
    justify-content: flex-end;
    gap: 3px;
    flex: 26;
    background: #4caf32;
    border-radius: 0 9px 9px 0;
    clip-path: polygon(4px 0, 100% 0, 100% 100%, 0 100%);
`;

const Thumb = styled.span`
    display: flex;
    align-items: center;
    justify-content: center;
    width: 18px;
    height: 18px;
    border-radius: 9px;
    background: #ffffff;
`;

const InfoRow = styled.div`
    display: flex;
    justify-content: space-between;
    height: ${p => p.$h || 21}px;
    padding-right: 1px;
    white-space: nowrap;
    i {
        font-style: normal;
        color: #787878;
    }
`;

const Pill = styled.div`
    position: absolute;
    right: 0;
    bottom: 16px;
    display: flex;
    align-items: center;
    width: 169px;
    height: 30px;
    padding-left: 12px;
    border-radius: 15px 0 0 15px;
    background: #3b3c43;
    color: #32c878;
    overflow: hidden;
    b {
        font-weight: normal;
        color: #ffffff;
        width: 64px;
        flex: none;
    }
    span {
        width: 60px;
        flex: none;
    }
`;

const ActionBar = styled.div`
    display: flex;
    align-items: center;
    height: 22px;
    flex: none;
    padding: 0 3px 0 6px;
    background: #1b1b1d;
    color: #c0c0c0;
`;

const Action = styled.button`
    display: flex;
    align-items: center;
    gap: 5px;
    width: ${p => p.$w}px;
    flex: none;
`;

const Plus = styled.button`
    width: 14px;
    height: 14px;
    margin-right: 16px;
    background: #e8e8e8;
    color: #404040;
    line-height: 13px;
    border-radius: 1px;
    font-weight: bold;
`;

const Ticker = styled.div`
    display: flex;
    gap: 52px;
    flex: 1;
    min-width: 0;
    white-space: nowrap;
    overflow: hidden;
    color: #ffffff;
`;

const StatusBar = styled.footer`
    display: flex;
    height: 15px;
    flex: none;
    background: #212127;
    line-height: 22px;
    color: #b0b0b0;
    overflow: hidden;
    white-space: nowrap;
`;

const FirstQuote = styled.div`
    display: flex;
    gap: 8px;
    width: 264px;
    flex: none;
    padding-left: 160px;
`;

const IndexQuote = styled.div`
    display: grid;
    grid-template-columns: 26px 60px 46px 46px 62px;
    width: 240px;
    flex: none;
`;

const Pct = styled.span`
    color: ${p => p.$color || '#10b420'};
`;

const Total = styled.span`
    width: 52px;
    margin-left: 3px;
`;

const Connection = styled.span`
    display: flex;
    gap: 6px;
    margin-left: 10px;
    svg {
        margin-top: 4px;
    }
    em {
        width: 12px;
        height: 16px;
        margin-top: 4px;
        background: #a0a0a0;
        color: #212127;
        font-style: normal;
        line-height: 14px;
        text-align: center;
    }
`;

const StatusIcons = styled.div`
    display: flex;
    gap: 16px;
    padding: 4px 16px 0 0;
`;

const Picker = styled.div`
    position: absolute;
    left: 0;
    bottom: 0;
    display: flex;
    align-items: center;
    gap: 10px;
    width: 160px;
    height: 20px;
    padding: 0 5px;
    background: #2d303d;
    color: #ffffff;
    b {
        margin-right: auto;
    }
`;
